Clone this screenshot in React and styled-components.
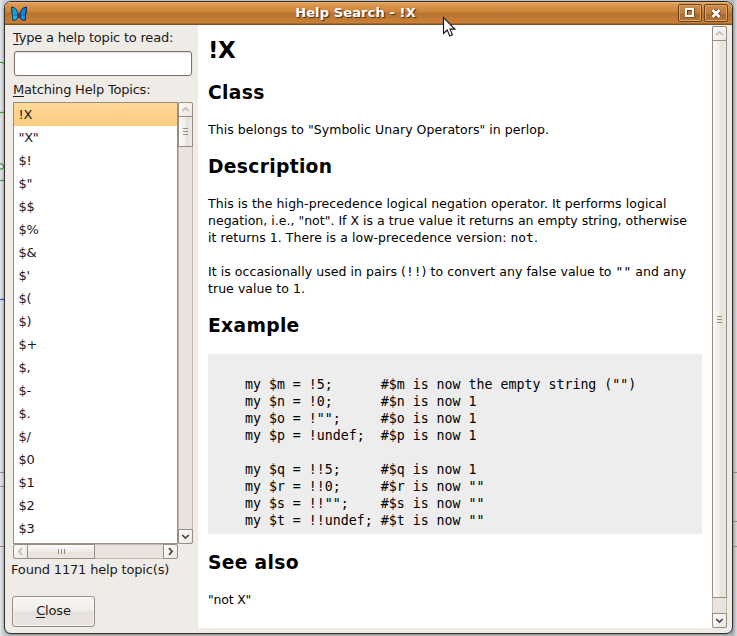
import React from 'react';
import styled, { createGlobalStyle } from 'styled-components';

const Global = createGlobalStyle`
  * { box-sizing: border-box; }
  body { margin: 0; overflow: hidden; font-family: "DejaVu Sans", sans-serif; font-size: 13px; color: #1a1a1a; }
  p, h1, h2, pre { margin: 0; }
`;

const Desktop = styled.div`
  position: relative;
  width: 737px;
  height: 636px;
  padding: 1px 0 0 4px;
  background: linear-gradient(90deg, #dfe5ea 0, #c6cbcf 5px, #c6cbcf 730px, #a9acb2 732px, #d8dadc 737px);
  overflow: hidden;
`;
const Behind = styled.svg`
  position: absolute;
  left: 0;
  top: 0;
`;
const Window = styled.div`
  position: relative;
  width: 729px;
  height: 633px;
  display: flex;
  flex-direction: column;
  border: 1px solid #37302a;
  border-radius: 7px;
  overflow: hidden;
  background: #efebe7;
  box-shadow: 0 1px 3px rgba(0, 0, 0, 0.35);
`;
const TitleBar = styled.header`
  height: 23px;
  flex: none;
  display: flex;
  align-items: center;
  padding: 0 4px 0 5px;
  background: linear-gradient(#e9b478 0, #dc9a50 2px, #cd8338 10px, #b87330 11px, #ca8136 21px, #7d5026 22px);
`;
const Title = styled.div`
  flex: 1;
  padding: 0 0 1px 7px;
  text-align: center;
  color: #fff;
  font-weight: bold;
  font-size: 13px;
  line-height: 20px;
  text-shadow: 1px 1px 1px #3d2a18;
  white-space: nowrap;
  letter-spacing: 0.12px;
`;
const WinButton = styled.button`
  width: 24px;
  height: 18px;
  margin: 0 0 1px 2px;
  padding: 0;
  display: grid;
  place-items: center;
  border: 1px solid #68431f;
  border-radius: 2px;
  background: linear-gradient(#d08c4b, #c07d3b 8px, #a96a30 9px, #b87538);
  box-shadow: inset 0 0 0 1px #dba56e;
`;
const Body = styled.div`
  flex: 1;
  min-height: 0;
  display: flex;
  padding: 0 5px 5px 0;
`;
const Side = styled.aside`
  width: 193px;
  padding: 4px 5px 0 8px;
  display: flex;
  flex-direction: column;
`;
const Label = styled.label`
  height: ${(p) => p.$h}px;
  line-height: 17px;
  white-space: nowrap;
  letter-spacing: -0.2px;
  u { text-underline-offset: 2px; text-decoration-thickness: 1px; text-decoration-skip-ink: none; }
`;
const Status = styled.output`
  height: 37px;
  padding-top: 2px;
  margin-left: -2px;
  line-height: 17px;
  white-space: nowrap;
  letter-spacing: -0.17px;
`;
const Entry = styled.input`
  width: 178px;
  height: 25px;
  flex: none;
  margin: 0 0 5px 1px;
  border: 1px solid #80736a;
  border-radius: 3px;
  background: #fff;
  box-shadow: inset 0 1px 0 #e4dfda, 0 0 0 1px #e8e3de;
`;
const ListGrid = styled.div`
  height: 457px;
  flex: none;
  display: grid;
  grid-template-columns: 165px 15px;
  grid-template-rows: 442px 15px;
`;
const List = styled.div`
  border: 1px solid #998c80;
  background: #fff;
  overflow: hidden;
`;
const Topic = styled.div`
  height: 23px;
  padding: 0 0 0 4.5px;
  line-height: 24px;
  letter-spacing: -0.3px;
  background: ${(p) => (p.$selected ? 'linear-gradient(#ffd99a, #fbcd80)' : '#fff')};
`;
const Scroll = styled.div`
  display: flex;
  flex-direction: ${(p) => (p.$horizontal ? 'row' : 'column')};
  margin-top: ${(p) => p.$top || 0}px;
  border: 1px solid #c9b9ac;
  background: #e9e3df;
  border-radius: 2px;
`;
const Arrow = styled.button`
  width: 15px;
  height: 15px;
  margin: -1px;
  flex: none;
  padding: 0;
  display: grid;
  place-items: center;
  border: 1px solid #998c80;
  border-radius: ${(p) => p.$round};
  background: linear-gradient(135deg, #fdfcfb, #ebe6e2);
`;
const Thumb = styled.div`
  ${(p) => (p.$horizontal
    ? `width: ${p.$size}px; margin: -1px 0 -1px 0;`
    : `height: ${p.$size}px; margin: 0 -1px;`)}
  flex: none;
  display: grid;
  place-items: center;
  border: 1px solid #998c80;
  background: linear-gradient(${(p) => (p.$horizontal ? '180deg' : '90deg')}, #fcfbfa, #f1eeeb 45%, #e7e1dc 60%, #ece7e3);
`;
const Gap = styled.div`flex: 1;`;
const Close = styled.button`
  width: 83px;
  height: 31px;
  flex: none;
  margin: 0 0 0 -1px;
  padding: 0 0 2px;
  border: 1px solid #998c80;
  border-radius: 3px;
  background: linear-gradient(#faf8f6, #f0edea 48%, #e6e1dc 52%, #ebe6e2);
  box-shadow: inset 0 0 0 1px rgba(255, 255, 255, 0.4);
  font: 13px "DejaVu Sans", sans-serif;
  letter-spacing: -0.15px;
  color: #1a1a1a;
  u { text-underline-offset: 2px; text-decoration-skip-ink: none; }
`;
const Article = styled.main`
  flex: 1;
  padding: 12px 10px 0;
  background: #fff;
  color: #000;
  font-size: 12.5px;
  line-height: 17px;
  white-space: nowrap;
`;
const H1 = styled.h1`
  font-size: 23px;
  line-height: 26px;
  letter-spacing: -0.4px;
  margin-bottom: 19px;
`;
const H2 = styled.h2`
  font-size: 18.7px;
  line-height: 22px;
  letter-spacing: 0.32px;
  margin-bottom: 17px;
`;
const Para = styled.p`
  margin-bottom: ${(p) => p.$after}px;
`;
const Line = styled.span`
  display: block;
  height: 17px;
  letter-spacing: ${(p) => p.$track || 0}px;
`;
const Code = styled.code`
  font-family: "DejaVu Sans Mono", monospace;
  font-size: 12.9px;
`;
const Example = styled.pre`
  width: 494px;
  height: 180px;
  padding: 5px;
  margin-bottom: 18px;
  background: #ededed;
  font: 13.28px/17px "DejaVu Sans Mono", monospace;
`;
const Pointer = styled.svg`
  position: absolute;
  left: 442px;
  top: 16px;
`;

const topics = ['!X', '"X"', '$!', '$"', '$$', '$%', '$&', "$'", '$(', '$)', '$+', '$,', '$-', '$.', '$/', '$0', '$1', '$2', '$3'];

const sample = `
    my $m = !5;      #$m is now the empty string ("")
    my $n = !0;      #$n is now 1
    my $o = !"";     #$o is now 1
    my $p = !undef;  #$p is now 1

    my $q = !!5;     #$q is now 1
    my $r = !!0;     #$r is now ""
    my $s = !!"";    #$s is now ""
    my $t = !!undef; #$t is now ""`;

const angles = { up: 0, right: 90, down: 180, left: 270 };

function Chevron({ dir, muted }) {
  return (
    <svg width="9" height="9" viewBox="0 0 9 9">
      <path d="M1.2 6 4.5 2.9 7.8 6" fill="none" stroke={muted ? '#c4b9ae' : '#4a4540'} strokeWidth="1.7" transform={`rotate(${angles[dir]} 4.5 4.5)`} />
    </svg>
  );
}

function Grip({ vertical }) {
  return (
    <svg width="7" height="7" viewBox="0 0 7 7" shapeRendering="crispEdges">
      <path d={vertical ? 'M.5 1v5M3.5 1v5M6.5 1v5' : 'M1 .5h5M1 3.5h5M1 6.5h5'} stroke="#998c80" />
    </svg>
  );
}

function Butterfly() {
  return (
    <svg width="18" height="18" viewBox="0 0 18 18">
      <path d="M1 1.5 4.5 2.2 7 5 8.7 9 8 13 6 15.5 3 16 2 14 2.3 10.5 1.2 7Z" fill="#123a68" />
      <path d="M17 1.5 13.5 2.2 11 5 9.3 9 10 13 12 15.5 15 16 16 14 15.7 10.5 16.8 7Z" fill="#122858" />
      <path d="M2 3 4.5 3.5 6.5 6 7.5 10 7 13 5 15 3 14.3 3.2 10Z" fill="#08c0f5" />
      <path d="M16 3 13.5 3.5 11.5 6 10.5 10 11 13 13 15 15 14.3 14.8 10Z" fill="#0797f2" />
      <path d="M3.2 4 7 11M2.8 9.8 6.8 10.5M14.8 4 11 11M15.2 9.8 11.2 10.5" stroke="#0b59b8" strokeWidth=".7" />
      <path d="M8.5 8v5M9.5 8v5" stroke="#7b2817" strokeWidth="1" />
    </svg>
  );
}

export default function App() {
  return (
    <Desktop>
      <Global />
      <Behind width="737" height="636">
        <path d="M0 472.5h4M0 486.5h4M0 546.5h4M733 472.5h4M733 521.5h4M733 546.5h4" stroke="#948b88" />
        <path d="M0 62.5q2-1 4 1M0 113q2-2 4 0M0 181q2-2 4 0" stroke="#278527" fill="none" />
        <circle cx="1" cy="166.5" r="2.7" stroke="#278527" fill="none" />
        <path d="M0 300q2-2 4 0" stroke="#2828c8" fill="none" />
      </Behind>
      <Window>
        <TitleBar>
          <Butterfly />
          <Title>Help Search - !X</Title>
          <WinButton aria-label="Maximize">
            <svg width="10" height="10" viewBox="0 0 10 10" shapeRendering="crispEdges">
              <path d="M0 0h10v10H0z" fill="#7a4d22" />
              <path d="M0 0h9v9H0zM2 2v5h5V2z" fill="#fff" fillRule="evenodd" />
              <path d="M2 2h5v5H2z" fill="#5d3917" />
              <path d="M3 3h4v4H3z" fill="#b87538" />
            </svg>
          </WinButton>
          <WinButton aria-label="Close window">
            <svg width="12" height="11" viewBox="0 0 12 11">
              <path d="M2.5 2 9.5 9M9.5 2 2.5 9" stroke="#5d3917" strokeWidth="4.4" />
              <path d="M2.5 2 9.5 9M9.5 2 2.5 9" stroke="#fff" strokeWidth="2.8" />
            </svg>
          </WinButton>
        </TitleBar>
        <Body>
          <Side>
            <Label $h={22}><u>T</u>ype a help topic to read:</Label>
            <Entry />
            <Label $h={21}><u>M</u>atching Help Topics:</Label>
            <ListGrid>
              <List>
                {topics.map((t, i) => <Topic key={t} $selected={i === 0}>{t}</Topic>)}
              </List>
              <Scroll>
                <Arrow $round="2px 2px 0 0"><Chevron dir="up" muted /></Arrow>
                <Thumb $size={31}><Grip /></Thumb>
                <Gap />
                <Arrow $round="0 0 2px 2px"><Chevron dir="down" /></Arrow>
              </Scroll>
              <Scroll $horizontal>
                <Arrow $round="2px 0 0 2px"><Chevron dir="left" muted /></Arrow>
                <Thumb $horizontal $size={68}><Grip vertical /></Thumb>
                <Gap />
                <Arrow $round="0 2px 2px 0"><Chevron dir="right" /></Arrow>
              </Scroll>
            </ListGrid>
            <Status>Found 1171 help topic(s)</Status>
            <Close><u>C</u>lose</Close>
          </Side>
          <Article>
            <H1>!X</H1>
            <H2>Class</H2>
            <Para $after={18}><Line $track={0.05}>This belongs to "Symbolic Unary Operators" in perlop.</Line></Para>
            <H2>Description</H2>
            <Para $after={17}>
              <Line $track={0.055}>This is the high-precedence logical negation operator. It performs logical</Line>
              <Line $track={0.015}>negation, i.e., "not". If X is a true value it returns an empty string, otherwise</Line>
              <Line $track={0.065}>it returns 1. There is a low-precedence version: <Code>not</Code>.</Line>
            </Para>
            <Para $after={18}>
              <Line $track={0.055}>It is occasionally used in pairs (<Code>!!</Code>) to convert any false value to <Code>""</Code> and any</Line>
              <Line $track={0.05}>true value to 1.</Line>
            </Para>
            <H2>Example</H2>
            <Example>{'\n'}{sample.slice(1)}</Example>
            <H2>See also</H2>
            <Para $after={0}><Line $track={-0.2}>"not X"</Line></Para>
          </Article>
          <Scroll $top={1}>
            <Arrow $round="2px 2px 0 0"><Chevron dir="up" muted /></Arrow>
            <Thumb $size={558}><Grip /></Thumb>
            <Gap />
            <Arrow $round="0 0 2px 2px"><Chevron dir="down" /></Arrow>
          </Scroll>
        </Body>
      </Window>
      <Pointer width="14" height="22" viewBox="0 0 14 22">
        <path d="M1.5 1.5v16l3.7-3.5 2.6 6 2.7-1.2-2.5-5.7h4.8z" fill="#fff" stroke="#111" strokeWidth="1.1" />
      </Pointer>
    </Desktop>
  );
}
